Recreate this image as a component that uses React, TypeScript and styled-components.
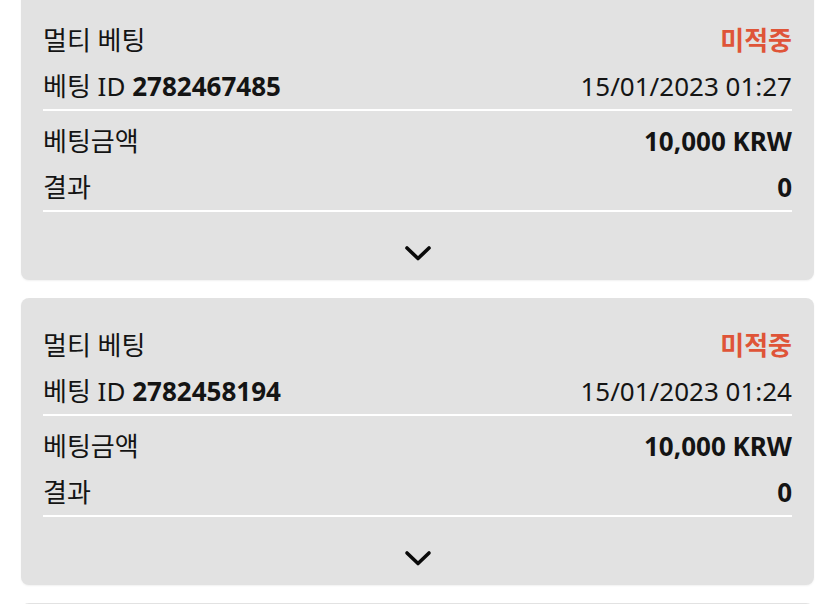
import React from 'react';
import styled, { createGlobalStyle } from 'styled-components';

const GlobalStyle = createGlobalStyle`
  html, body {
    margin: 0;
    padding: 0;
    background: #ffffff;
  }
  body {
    font-family: "Noto Sans", "Noto Sans CJK KR", sans-serif;
    color: #141414;
    overflow: hidden;
  }
`;

const List = styled.div`
  display: flex;
  flex-direction: column;
  gap: 18px;
  padding: 0 21px 0 21px;
  margin-top: -7px;
`;

const Card = styled.div`
  background: #e2e2e2;
  border-radius: 8px;
  padding: 0 22px;
  box-shadow: 0 1px 2px rgba(0, 0, 0, 0.06);
`;

const Section = styled.div<{ $top: number }>`
  display: flex;
  flex-direction: column;
  padding-top: ${p => p.$top}px;
  border-bottom: 2px solid #ffffff;
`;

const Row = styled.div`
  display: flex;
  justify-content: space-between;
  align-items: center;
  height: 46px;
  font-size: 26px;
  line-height: 46px;
`;

const Label = styled.span`
  font-weight: 400;
`;

const Strong = styled.span`
  font-weight: 700;
`;

const Status = styled.span`
  font-weight: 700;
  color: #df5438;
`;

const Footer = styled.div`
  display: flex;
  justify-content: center;
  padding: 33px 0 17px;
`;

const Chevron = () => (
  <svg width="28" height="18" viewBox="0 0 28 18">
    <polyline
      points="3,3 14,13.5 25,3"
      fill="none"
      stroke="#0a0a0a"
      strokeWidth="3.6"
      strokeLinecap="round"
      strokeLinejoin="round"
    />
  </svg>
);

interface Bet {
  id: string;
  date: string;
  amount: string;
  result: string;
}

const bets: Bet[] = [
  { id: '2782467485', date: '15/01/2023 01:27', amount: '10,000 KRW', result: '0' },
  { id: '2782458194', date: '15/01/2023 01:24', amount: '10,000 KRW', result: '0' },
  { id: '2782450001', date: '15/01/2023 01:20', amount: '10,000 KRW', result: '0' },
];

const BetCard: React.FC<{ bet: Bet }> = ({ bet }) => (
  <Card>
    <Section $top={24}>
      <Row>
        <Label>멀티 베팅</Label>
        <Status>미적중</Status>
      </Row>
      <Row>
        <Label>
          베팅 ID <Strong>{bet.id}</Strong>
        </Label>
        <Label>{bet.date}</Label>
      </Row>
    </Section>
    <Section $top={7}>
      <Row>
        <Label>베팅금액</Label>
        <Strong>{bet.amount}</Strong>
      </Row>
      <Row>
        <Label>결과</Label>
        <Strong>{bet.result}</Strong>
      </Row>
    </Section>
    <Footer>
      <Chevron />
    </Footer>
  </Card>
);

export default function App() {
  return (
    <>
      <GlobalStyle />
      <List>
        {bets.map(bet => (
          <BetCard key={bet.id} bet={bet} />
        ))}
      </List>
    </>
  );
}
